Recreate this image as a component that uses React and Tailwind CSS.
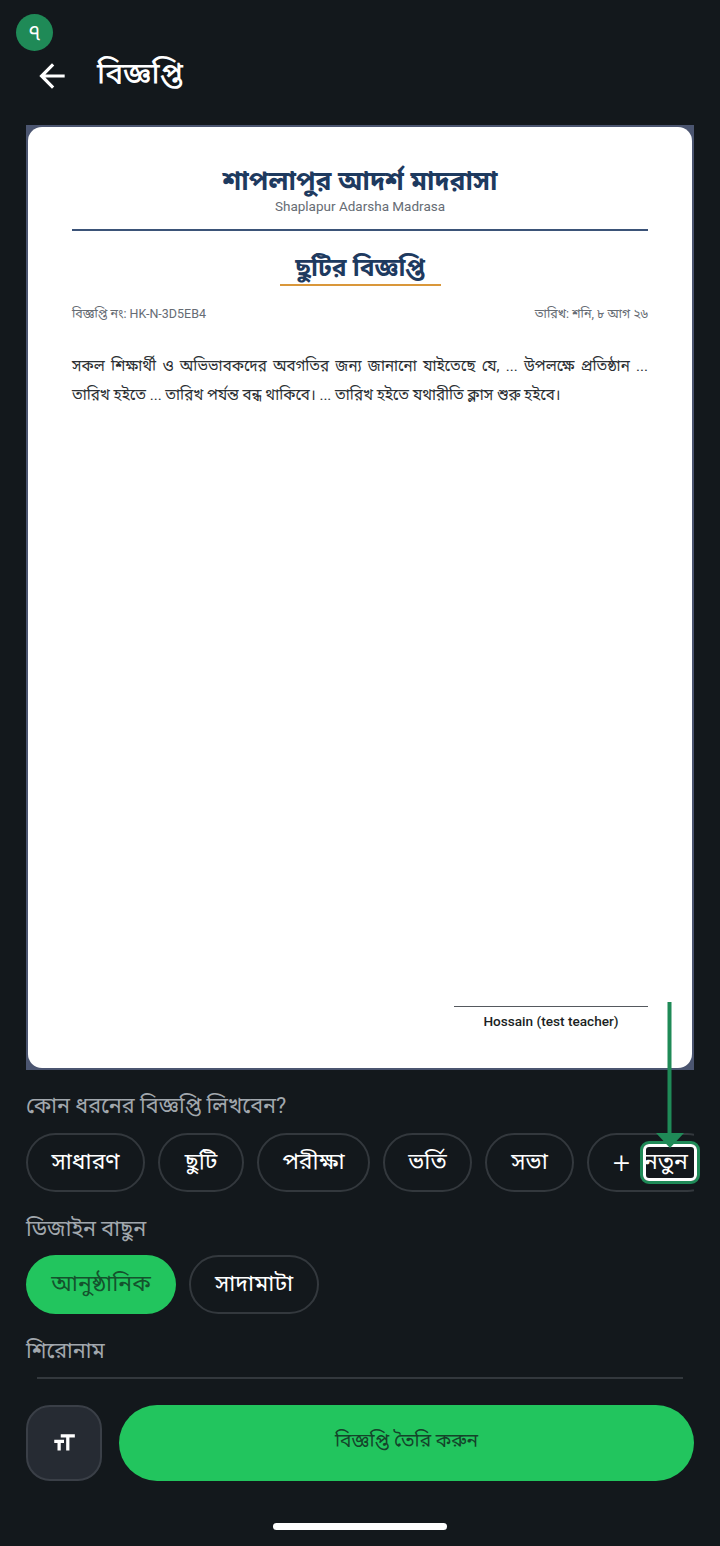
import React from "react";
import { MdArrowBack, MdFormatSize } from "react-icons/md";

const noticeTypes = [
  { label: "সাধারণ", width: "w-[119px]" },
  { label: "ছুটি", width: "w-[86px]" },
  { label: "পরীক্ষা", width: "w-[113px]" },
  { label: "ভর্তি", width: "w-[89px]" },
  { label: "সভা", width: "w-[89px]" },
];

const Chip = ({ children, active, className = "" }) => (
  <div
    className={`h-[59px] shrink-0 rounded-[30px] flex items-center justify-center text-[23px] ${
      active
        ? "bg-[#22c55e] text-[#14532d]"
        : "border-2 border-[#33383d] text-white"
    } ${className}`}
  >
    {children}
  </div>
);

const Label = ({ children, className = "" }) => (
  <div className={`text-[21.6px] leading-[32px] text-[#a1a7ad] ${className}`}>{children}</div>
);

const NoticeCard = () => (
  <div className="h-[945px] bg-[#4b5570] p-[2px]">
    <div className="h-full bg-white rounded-[14px] px-[44px] flex flex-col">
      <div className="text-center text-[#1e3a5f] font-bold text-[26.5px] leading-[32px] mt-[38px]">
        শাপলাপুর আদর্শ মাদরাসা
      </div>
      <div className="text-center text-[#666c74] text-[13.5px] leading-[18px]">Shaplapur Adarsha Madrasa</div>
      <div className="h-[2px] bg-[#3b5378] mt-[14px]"></div>
      <div className="flex justify-center mt-[22px]">
        <div className="w-[161px] text-center text-[#1e3a5f] font-bold text-[24.6px] leading-[30px] pb-[1px] border-b-2 border-[#d9973a]">
          ছুটির বিজ্ঞপ্তি
        </div>
      </div>
      <div className="flex justify-between text-[12.5px] leading-[16px] text-[#666c74] mt-[20px]">
        <span>বিজ্ঞপ্তি নং: HK-N-3D5EB4</span>
        <span>তারিখ: শনি, ৮ আগ ২৬</span>
      </div>
      <p className="text-[15.15px] leading-[29px] text-[#2b2f33] mt-[30px] text-justify">
        সকল শিক্ষার্থী ও অভিভাবকদের অবগতির জন্য জানানো যাইতেছে যে, ... উপলক্ষে প্রতিষ্ঠান ... তারিখ হইতে ... তারিখ পর্যন্ত বন্ধ থাকিবে। ... তারিখ হইতে যথারীতি ক্লাস শুরু হইবে।
      </p>
      <div className="mt-auto mb-[38px] self-end w-[194px] border-t border-[#55595e] pt-[5px] text-center text-[13.6px] leading-[18px] font-medium text-[#1b1f23]">
        Hossain (test teacher)
      </div>
    </div>
  </div>
);

export default function App() {
  return (
    <div className="relative w-[720px] h-[1546px] overflow-hidden bg-[#13181c] font-['Roboto','Noto_Sans','Noto_Sans_Bengali',sans-serif]">
      <div className="flex items-center h-[125px] pt-[26px] pl-[33px]">
        <MdArrowBack className="text-white" size={38} />
        <h1 className="ml-[26px] mb-[4px] text-[30px] font-medium text-white">বিজ্ঞপ্তি</h1>
      </div>

      <div className="px-[26px] flex flex-col">
        <NoticeCard />

        <Label className="mt-[20px]">কোন ধরনের বিজ্ঞপ্তি লিখবেন?</Label>
        <div className="flex gap-[13px] mt-[11px] overflow-hidden">
          {noticeTypes.map((t) => (
            <Chip key={t.label} className={t.width}>{t.label}</Chip>
          ))}
          <Chip className="w-[130px] justify-start pl-[24px] gap-[14px]">
            <span className="text-[30px] font-light">+</span>
            <span>নতুন</span>
          </Chip>
        </div>

        <Label className="mt-[21px]">ডিজাইন বাছুন</Label>
        <div className="flex gap-[13px] mt-[10px]">
          <Chip active className="w-[150px]">আনুষ্ঠানিক</Chip>
          <Chip className="w-[130px]">সাদামাটা</Chip>
        </div>

        <Label className="mt-[21px]">শিরোনাম</Label>
        <div className="h-[2px] bg-[#33383d] mx-[11px] mt-[10px]"></div>

        <div className="flex gap-[17px] mt-[26px]">
          <div className="w-[76px] h-[76px] shrink-0 rounded-[24px] bg-[#262b33] border-2 border-[#3a3f47] flex items-center justify-center text-white">
            <MdFormatSize size={26} />
          </div>
          <div className="flex-1 h-[76px] pb-[3px] rounded-[38px] bg-[#22c55e] flex items-center justify-center text-[19.2px] text-[#14432a]">
            বিজ্ঞপ্তি তৈরি করুন
          </div>
        </div>
      </div>

      <div className="mx-auto mt-[42px] w-[174px] h-[7px] rounded-full bg-white"></div>

      {/* tutorial overlay */}
      <div className="absolute left-[16px] top-[14px] w-[37px] h-[37px] rounded-full bg-[#1f8a57] flex items-center justify-center text-white text-[22px]">৭</div>
      <div className="absolute left-[640px] top-[1141px] w-[60px] h-[43px] rounded-[9px] border-[3px] border-[#1f8a57]">
        <div className="w-full h-full rounded-[6px] border-[3px] border-white"></div>
      </div>
      <svg className="absolute left-[655px] top-[1002px]" width="30" height="146" viewBox="0 0 30 146">
        <rect x="12.5" y="0" width="4" height="134" fill="#1f8a57" />
        <polygon points="1,131 29,131 15,146" fill="#1f8a57" />
      </svg>
    </div>
  );
}
